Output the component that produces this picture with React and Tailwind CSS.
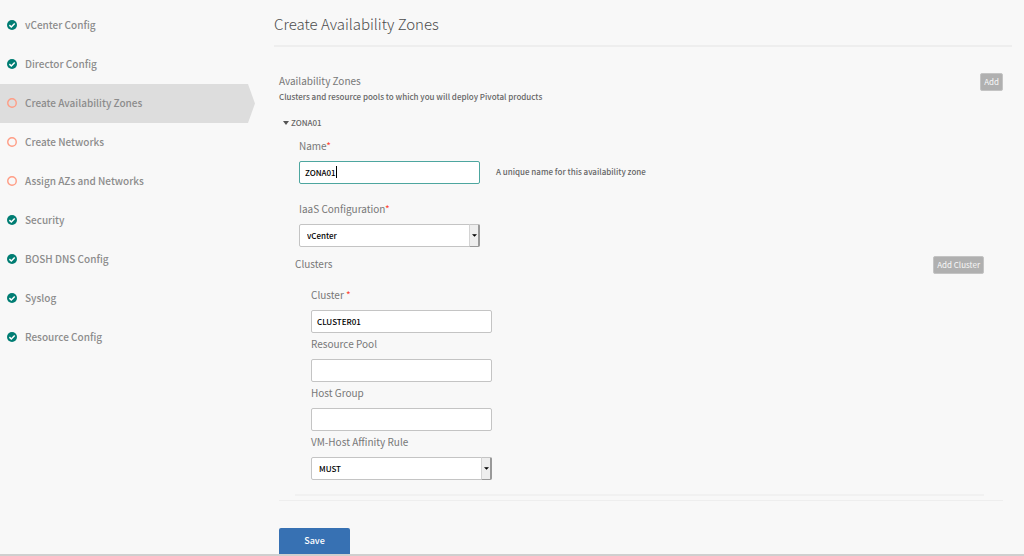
import React, { useState } from "react";

const steps = [
  { name: "vCenter Config", done: true },
  { name: "Director Config", done: true },
  { name: "Create Availability Zones", done: false },
  { name: "Create Networks", done: false },
  { name: "Assign AZs and Networks", done: false },
  { name: "Security", done: true },
  { name: "BOSH DNS Config", done: true },
  { name: "Syslog", done: true },
  { name: "Resource Config", done: true },
];

const StatusIcon = ({ done }) =>
  done ? (
    <svg viewBox="0 0 20 20" className="size-[10px] shrink-0" aria-hidden="true">
      <circle cx="10" cy="10" r="10" fill="#007d73" />
      <path d="M4.8 10.2l3.8 3.7 6.8-6.8" fill="none" stroke="#fff" strokeWidth="3" />
    </svg>
  ) : (
    <svg viewBox="0 0 20 20" className="size-[10px] shrink-0" aria-hidden="true">
      <circle cx="10" cy="10" r="8.5" fill="none" stroke="#ff9d85" strokeWidth="2.8" />
    </svg>
  );

const Sidebar = ({ active, onSelect }) => (
  <nav className="w-[255px] shrink-0 pt-[6px]">
    <ul>
      {steps.map((step) => (
        <li key={step.name} className="flex h-[39px]">
          <a
            href="#"
            onClick={(e) => {
              e.preventDefault();
              onSelect(step.name);
            }}
            className={`flex flex-1 items-center gap-2 pb-px pl-[7px] text-[10px] leading-4 font-medium text-[#8c8c8c] ${
              step.name === active ? "bg-[#dddddd]" : ""
            }`}
          >
            <StatusIcon done={step.done} />
            {step.name}
          </a>
          {/* Arrow tip of the active step */}
          <svg
            viewBox="0 0 7 39"
            preserveAspectRatio="none"
            className="h-full w-[7px]"
            aria-hidden="true"
          >
            {step.name === active && <path d="M0 0L7 19.5L0 39Z" fill="#dddddd" />}
          </svg>
        </li>
      ))}
    </ul>
  </nav>
);

const Label = ({ htmlFor, children, required }) => (
  <label htmlFor={htmlFor} className="block h-[26px] pt-[3px] text-[10px] leading-4 text-[#777777]">
    {children}
    {required && <span className="text-[#ff4433]">*</span>}
  </label>
);

const TextInput = ({ id, value, onChange }) => (
  <input
    id={id}
    type="text"
    value={value}
    onChange={(e) => onChange(e.target.value)}
    className="block h-[23px] w-[181px] rounded-xs border border-[#c4c4c4] bg-white px-[5px] text-[8px] font-medium text-black outline-none"
  />
);

// Name field, ready for typing, with its own cursor mark until the first edit
const NameInput = ({ id, value, onChange }) => {
  const [edited, setEdited] = useState(false);

  return (
    <div className="relative">
      <input
        id={id}
        type="text"
        value={value}
        onChange={(e) => {
          setEdited(true);
          onChange(e.target.value);
        }}
        className="block h-[23px] w-[181px] rounded-xs border border-[#4da69f] bg-white px-[5px] text-[8px] font-medium text-black outline-none"
      />
      {!edited && (
        <span className="pointer-events-none absolute top-[5px] left-[37px] h-3 w-px bg-black" />
      )}
    </div>
  );
};

const Select = ({ id, value, options, onChange }) => (
  <div className="relative h-[23px] w-[181px]">
    <select
      id={id}
      value={value}
      onChange={(e) => onChange(e.target.value)}
      className="block h-full w-full appearance-none rounded-xs border border-[#c4c4c4] bg-white pl-[7px] text-[8px] font-medium text-black outline-none"
    >
      {options.map((option) => (
        <option key={option}>{option}</option>
      ))}
    </select>
    <span className="pointer-events-none absolute inset-y-0 right-0 flex w-[11px] items-center justify-center rounded-r-xs border border-r-2 border-t-[#c4c4c4] border-r-[#999999] border-b-[#999999] border-l-[#d4d4d4] bg-[#eeeeee]">
      <svg viewBox="0 0 6 3" className="h-[3px] w-[5px]" aria-hidden="true">
        <path d="M0 0H6L3 3Z" fill="#000" />
      </svg>
    </span>
  </div>
);

const SmallButton = ({ children }) => (
  <button
    type="button"
    className="h-[18px] rounded-xs border border-[#c4c4c4] bg-[#b0b0b0] px-[3px] text-[8px] leading-4 text-[#f8f8f8]"
  >
    {children}
  </button>
);

export default function App() {
  const [active, setActive] = useState("Create Availability Zones");
  const [open, setOpen] = useState(true);
  const [form, setForm] = useState({
    name: "ZONA01",
    iaas: "vCenter",
    cluster: "CLUSTER01",
    resourcePool: "",
    hostGroup: "",
    affinity: "MUST",
  });

  const handleChange = (key) => (value) => setForm({ ...form, [key]: value });

  return (
    <div className="flex min-h-screen border-b-2 border-[#cfcfcf] bg-[#f8f8f8] font-['Noto_Sans_CJK_SC',sans-serif]">
      <Sidebar active={active} onSelect={setActive} />

      <main className="min-w-0 flex-1 pr-3 pl-[19px]">
        <h1 className="border-b-2 border-[#eeeeee] pt-3 pb-[9px] text-[15px] leading-6 font-light text-[#4c4c4c]">
          Create Availability Zones
        </h1>

        <form onSubmit={(e) => e.preventDefault()} className="pr-[9px] pl-[5px]">
          <section className="border-b border-[#eeeeee] pt-[26px] pb-[4px]">
            <div className="flex justify-between">
              <div>
                <h2 className="text-[10px] leading-4 text-[#777777]">Availability Zones</h2>
                <p className="text-[8px] leading-4 font-medium text-[#666666]">
                  Clusters and resource pools to which you will deploy Pivotal products
                </p>
              </div>
              <SmallButton>Add</SmallButton>
            </div>

            <button
              type="button"
              aria-expanded={open}
              onClick={() => setOpen(!open)}
              className="mt-[10px] ml-1 flex items-center gap-[2px] text-[8px] leading-4 font-medium text-[#666666]"
            >
              <svg viewBox="0 0 6 4" className="h-[4px] w-[6px]" aria-hidden="true">
                <path d="M0 0H6L3 4Z" fill="#555555" />
              </svg>
              {form.name}
            </button>

            {open && (
              <>
                <div className="mt-[4px] ml-[20px]">
                  <Label htmlFor="az-name" required>Name</Label>
                  <div className="flex items-center gap-4">
                    <NameInput id="az-name" value={form.name} onChange={handleChange("name")} />
                    <span className="pb-px text-[8px] leading-4 font-medium text-[#666666]">
                      A unique name for this availability zone
                    </span>
                  </div>
                  <div className="mt-[14px]">
                    <Label htmlFor="iaas" required>IaaS Configuration</Label>
                    <Select
                      id="iaas"
                      value={form.iaas}
                      options={["vCenter"]}
                      onChange={handleChange("iaas")}
                    />
                  </div>
                </div>

                <div className="mt-[9px] mr-[19px] ml-4 border-b-2 border-[#f1f1f1] pb-[14px]">
                  <div className="flex items-start justify-between">
                    <h3 className="text-[10px] leading-4 text-[#777777]">Clusters</h3>
                    <SmallButton>Add Cluster</SmallButton>
                  </div>
                  <div className="mt-[10px] ml-4">
                    <Label htmlFor="cluster" required>Cluster </Label>
                    <TextInput id="cluster" value={form.cluster} onChange={handleChange("cluster")} />
                    <Label htmlFor="resource-pool">Resource Pool</Label>
                    <TextInput id="resource-pool" value={form.resourcePool} onChange={handleChange("resourcePool")} />
                    <Label htmlFor="host-group">Host Group</Label>
                    <TextInput id="host-group" value={form.hostGroup} onChange={handleChange("hostGroup")} />
                    <Label htmlFor="affinity">VM-Host Affinity Rule</Label>
                    <Select
                      id="affinity"
                      value={form.affinity}
                      options={["MUST", "SHOULD"]}
                      onChange={handleChange("affinity")}
                    />
                  </div>
                </div>
              </>
            )}
          </section>

          <button
            type="submit"
            className="mt-[27px] block h-[26px] w-[71px] rounded-t-xs bg-[#3771b3] text-[9px] leading-4 font-medium text-white"
          >
            Save
          </button>
        </form>
      </main>
    </div>
  );
}
